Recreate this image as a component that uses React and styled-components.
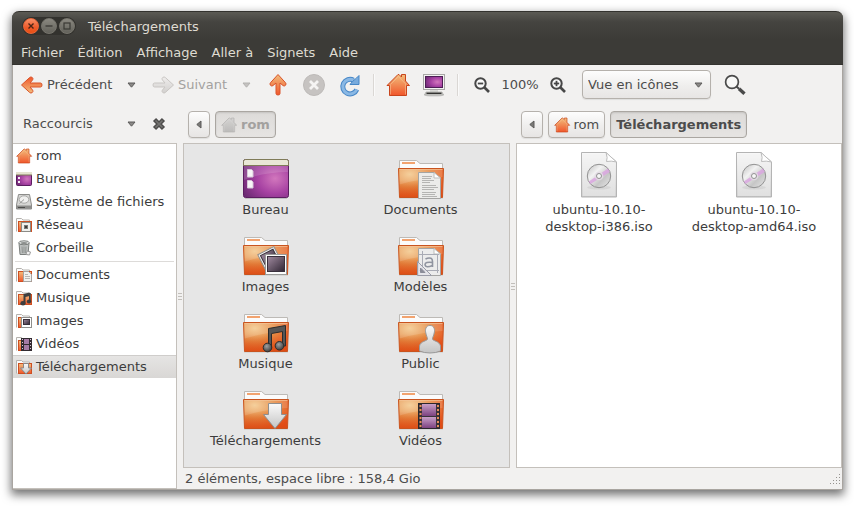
import React from "react";
import styled, { createGlobalStyle, css } from "styled-components";

const Global = createGlobalStyle`
  *, *::before, *::after { box-sizing: border-box; }
  body { margin: 0; background: #fff; }
  body, button, select {
    font-family: "DejaVu Sans", sans-serif;
    font-size: 13px;
    line-height: 17px;
    color: #4c4c4c;
  }
  button, select { border: 0; padding: 0; margin: 0; background: none; }
  svg { display: block; flex: none; overflow: visible; }
`;

const Desktop = styled.div`
  min-height: 100vh;
  display: flex;
  padding: 11px 11px 18px 12px;
`;

const Window = styled.div`
  flex: 1;
  min-width: 0;
  display: flex;
  flex-direction: column;
  border: 1px solid #a9a5a0;
  border-top: 0;
  border-radius: 7px 7px 0 0;
  background: #f2f1f0;
  box-shadow: 0 4px 10px 1px rgba(0, 0, 0, 0.55);
`;

const TitleBar = styled.header`
  display: flex;
  align-items: center;
  gap: 12px;
  height: 29px;
  margin: 0 -1px;
  padding: 0 10px;
  border-radius: 7px 7px 0 0;
  border-top: 1px solid #33322e;
  background: linear-gradient(#5b5a54, #454440 35%, #3c3b37);
`;

const Title = styled.h1`
  margin: 0;
  font-size: 13px;
  font-weight: normal;
  color: #dfdbd2;
`;

const WindowControls = styled.div`
  display: flex;
  gap: 2px;
  padding: 1px;
  border-radius: 10px;
  background: #33322e;
`;

const WindowControl = styled.button`
  width: 16px;
  height: 16px;
  border-radius: 50%;
  border: 1px solid ${(p) => (p.$primary ? "#e8663a" : "#77756d")};
  background: ${(p) =>
    p.$primary
      ? "linear-gradient(#f79068, #ee5a2a 60%, #e84f12)"
      : "linear-gradient(#8a8880, #63625b)"};
`;

const MenuBar = styled.nav`
  display: flex;
  align-items: center;
  gap: 14px;
  height: 25px;
  margin: 0 -1px;
  padding: 0 9px;
  border-bottom: 1px solid #34332f;
  background: #3c3b37;
`;

const MenuItem = styled.button`
  color: #dfdbd2;
`;

const Toolbar = styled.div`
  display: flex;
  align-items: center;
  height: 39px;
  padding: 0 5px;
`;

const NavGroup = styled.div`
  display: flex;
  align-items: center;
  gap: 4px;
  & + & { margin-left: 4px; }
`;

const NavButton = styled.button`
  display: flex;
  align-items: center;
  gap: 4px;
  width: ${(p) => p.$width}px;
  height: 30px;
  padding: 0 3px;
  white-space: nowrap;
  &:disabled { color: #a3a19f; }
`;

const IconButton = styled.button`
  display: flex;
  flex: none;
  align-items: center;
  justify-content: center;
  width: ${(p) => p.$width || 36}px;
  height: 30px;
`;

const Separator = styled.div`
  width: 2px;
  height: 22px;
  margin: 0 5px;
  border-left: 1px solid #dad7d4;
  border-right: 1px solid #fafafa;
`;

const ZoomLevel = styled.output`
  width: 40px;
  text-align: center;
`;

const raised = css`
  border: 1px solid #b5b1ac;
  border-radius: 4px;
  background: linear-gradient(#fdfdfd, #efeeed 55%, #e7e5e4);
  box-shadow: 0 1px 1px rgba(0, 0, 0, 0.08);
`;

const pressed = css`
  border: 1px solid #aaa6a1;
  border-radius: 4px;
  background: linear-gradient(#dddbd9, #e6e4e2);
  box-shadow: inset 0 1px 2px rgba(0, 0, 0, 0.12);
`;

const SelectBox = styled.div`
  display: grid;
  align-items: center;
  width: ${(p) => p.$width}px;
  margin: ${(p) => (p.$framed ? "0 6px" : "0")};
  > * { grid-area: 1 / 1; }
  > svg {
    justify-self: end;
    margin-right: 8px;
    pointer-events: none;
  }
`;

const Select = styled.select`
  appearance: none;
  width: 100%;
  height: 29px;
  padding: 0 22px 0 5px;
  ${(p) => p.$framed && raised}
`;

const Body = styled.div`
  flex: 1;
  display: flex;
  min-height: 0;
`;

const Sidebar = styled.aside`
  flex: none;
  display: flex;
  flex-direction: column;
  width: 164px;
`;

const SideHeader = styled.div`
  display: flex;
  align-items: center;
  height: 39px;
  padding-left: 5px;
`;

const Places = styled.nav`
  flex: 1;
  border: 1px solid #c4c0bb;
  border-left: 0;
  background: #fff;
`;

const Place = styled.button`
  display: flex;
  align-items: center;
  gap: 4px;
  width: 100%;
  height: 23px;
  padding: 0 3px;
  color: #3c3c3c;
  text-align: left;
  white-space: nowrap;
  ${(p) =>
    p.$selected &&
    css`
      box-shadow: inset 0 1px #cfcdcb;
      background: linear-gradient(#e6e5e4, #d9d7d5);
    `}
`;

const PlaceDivider = styled.hr`
  height: 1px;
  margin: 2px 2px 1px;
  border: 0;
  background: #dddbd9;
`;

const Splitter = styled.div`
  flex: none;
  display: flex;
  flex-direction: column;
  align-items: center;
  justify-content: center;
  gap: 2px;
  width: 6px;
`;

const Grip = styled.i`
  width: 4px;
  height: 1px;
  background: #c2bfbb;
`;

const Main = styled.main`
  flex: 1;
  min-width: 0;
  display: flex;
  flex-direction: column;
`;

const Panes = styled.div`
  flex: 1;
  display: flex;
`;

const Pane = styled.section`
  flex: 1;
  min-width: 0;
  display: flex;
  flex-direction: column;
`;

const PathBar = styled.nav`
  display: flex;
  align-items: center;
  gap: 5px;
  height: 39px;
  padding: 2px 5px 0;
`;

const PathButton = styled.button`
  display: flex;
  align-items: center;
  justify-content: center;
  gap: 4px;
  height: 27px;
  padding: 0 5px;
  min-width: 22px;
  font-weight: ${(p) => (p.$current ? "bold" : "normal")};
  ${(p) => (p.$current ? pressed : raised)}
  ${(p) => p.$dim && css`color: #a3a19f; svg { filter: grayscale(1); opacity: 0.35; }`}
`;

const FileGrid = styled.div`
  flex: 1;
  display: grid;
  grid-template-columns: repeat(auto-fill, 155px);
  align-content: start;
  gap: 18px 0;
  padding: ${(p) => (p.$inactive ? "15px 0 8px 4px" : "8px 0 8px 5px")};
  border: 1px solid #c4c0bb;
  background: ${(p) => (p.$inactive ? "#e6e6e6" : "#fff")};
`;

const FileItem = styled.button`
  display: flex;
  flex-direction: column;
  align-items: center;
  gap: 1px;
  color: #3c3c3c;
`;

const FileName = styled.span`
  max-width: 130px;
`;

const StatusBar = styled.footer`
  display: flex;
  align-items: center;
  justify-content: space-between;
  height: 21px;
  padding-left: 2px;
`;

const Defs = styled.svg`
  position: absolute;
  width: 0;
  height: 0;
`;

function Gradients() {
  return (
    <Defs aria-hidden="true">
      <defs>
        <linearGradient id="orange" x1="0" y1="0" x2="0" y2="1">
          <stop offset="0" stopColor="#f2bd7c" />
          <stop offset="1" stopColor="#f0562b" />
        </linearGradient>
        <linearGradient id="arrowOrange" x1="0" y1="0" x2="1" y2="0">
          <stop offset="0" stopColor="#f6c184" />
          <stop offset="1" stopColor="#ef7a41" />
        </linearGradient>
        <linearGradient id="grey" x1="0" y1="0" x2="0" y2="1">
          <stop offset="0" stopColor="#efedec" />
          <stop offset="1" stopColor="#d2d0ce" />
        </linearGradient>
        <linearGradient id="silver" x1="0" y1="0" x2="0" y2="1">
          <stop offset="0" stopColor="#fafafa" />
          <stop offset="1" stopColor="#c4c4c4" />
        </linearGradient>
        <radialGradient id="folder" cx="0.25" cy="0.2" r="0.9">
          <stop offset="0" stopColor="#f3c88c" />
          <stop offset="0.5" stopColor="#e58c45" />
          <stop offset="1" stopColor="#e8531f" />
        </radialGradient>
        <linearGradient id="folderShade" x1="0" y1="0" x2="0" y2="1">
          <stop offset="0.4" stopColor="#d9470f" stopOpacity="0" />
          <stop offset="1" stopColor="#d9470f" stopOpacity="0.65" />
        </linearGradient>
        <radialGradient id="purple" cx="0.7" cy="0.5" r="0.8">
          <stop offset="0" stopColor="#d277bd" />
          <stop offset="0.5" stopColor="#a641a2" />
          <stop offset="1" stopColor="#6b2a72" />
        </radialGradient>
        <linearGradient id="photo" x1="0" y1="0" x2="1" y2="1">
          <stop offset="0" stopColor="#a18ba0" />
          <stop offset="1" stopColor="#2f2533" />
        </linearGradient>
        <linearGradient id="film" x1="0" y1="0" x2="0" y2="1">
          <stop offset="0" stopColor="#c9a0c8" />
          <stop offset="1" stopColor="#7c4280" />
        </linearGradient>
        <linearGradient id="disc" x1="0" y1="0" x2="1" y2="1">
          <stop offset="0" stopColor="#bdbdbd" />
          <stop offset="0.35" stopColor="#f2f2f2" />
          <stop offset="0.65" stopColor="#c6c6c6" />
          <stop offset="1" stopColor="#e8e8e8" />
        </linearGradient>
        <radialGradient id="noteHead" cx="0.4" cy="0.35" r="0.7">
          <stop offset="0" stopColor="#a0a0a0" />
          <stop offset="1" stopColor="#3a3a3a" />
        </radialGradient>
      </defs>
    </Defs>
  );
}

const ARROW_RIGHT =
  "M2.5 9 Q1 9 1 11 Q1 13 2.5 13 H13 L10.3 16.2 Q9.6 17.6 10.8 18.6 Q12.2 19.6 13.4 18.4 L21.5 11 L13.4 3.6 Q12.2 2.4 10.8 3.4 Q9.6 4.4 10.3 5.8 L13 9 Z";

function BigArrow({ direction, muted }) {
  const turn = { right: 0, left: 180, up: -90 }[direction];
  return (
    <svg width="22" height="22" viewBox="0 0 22 22">
      <path
        d={ARROW_RIGHT}
        transform={`rotate(${turn} 11 11)`}
        fill={muted ? "url(#grey)" : direction === "up" ? "url(#arrowUp)" : "url(#orange)"}
        stroke={muted ? "#c9c6c3" : "#d9542a"}
        strokeLinejoin="round"
      />
      <defs>
        <linearGradient id="arrowUp" x1="1" y1="0" x2="0" y2="0">
          <stop offset="0" stopColor="#f2bd7c" />
          <stop offset="1" stopColor="#f0562b" />
        </linearGradient>
      </defs>
    </svg>
  );
}

function Caret({ muted }) {
  return (
    <svg width="9" height="6" viewBox="0 0 9 6">
      <path
        d="M1 1 H8 L4.5 5.2 Z"
        fill={muted ? "#c4c2c0" : "#8b8987"}
        stroke={muted ? "#b4b2b0" : "#5c5b5a"}
        strokeLinejoin="round"
      />
    </svg>
  );
}

function CaretLeft() {
  return (
    <svg width="6" height="9" viewBox="0 0 6 9">
      <path d="M5 1 V8 L0.8 4.5 Z" fill="#7a7977" stroke="#5c5b5a" strokeLinejoin="round" />
    </svg>
  );
}

function StopIcon() {
  return (
    <svg width="22" height="22" viewBox="0 0 22 22">
      <circle cx="11" cy="11" r="10.5" fill="#c6c3c1" stroke="#bdbab8" />
      <path d="M7 7 L15 15 M15 7 L7 15" stroke="#f5f4f3" strokeWidth="2.8" />
    </svg>
  );
}

function ReloadIcon() {
  return (
    <svg width="20" height="22" viewBox="0 0 20 22">
      <path d="M13.5 6.2 A7.3 7.3 0 1 0 16.8 15.5" fill="none" stroke="#4787c7" strokeWidth="5" />
      <path d="M13.5 6.2 A7.3 7.3 0 1 0 16.8 15.5" fill="none" stroke="#8ab8e4" strokeWidth="3" />
      <path d="M19 1.5 V10.5 H10 L12.5 7.5 L16.5 4 Z" fill="#78abdd" stroke="#4787c7" strokeLinejoin="round" />
    </svg>
  );
}

function HomeIcon({ size = 24 }) {
  return (
    <svg width={size} height={size} viewBox="0 0 24 24">
      <path
        d="M3.5 22.5 V12.5 H1 L12 1.5 H13 L15.5 4 V1.5 H19.5 V8 L23.5 12.5 H20.5 V22.5 Z"
        fill="url(#orange)" stroke="#c8451d" strokeLinejoin="round"
      />
      <path d="M4.5 21.5 V11.5 L12.5 3.5 L19.5 10.8 V21.5" fill="none" stroke="#f7c79a" opacity="0.55" />
    </svg>
  );
}

function ComputerIcon() {
  return (
    <svg width="22" height="24" viewBox="0 0 22 24">
      <ellipse cx="11" cy="22" rx="10" ry="1.6" fill="#000" opacity="0.15" />
      <rect x="0.5" y="1.5" width="21" height="15" fill="#f4f4f2" stroke="#a8a8a6" />
      <rect x="2.5" y="3.5" width="17" height="11" fill="url(#purple)" stroke="#4d1f55" />
      <rect x="7" y="17" width="8" height="2" fill="#d9d9d6" />
      <path d="M3 19 H19 L20.5 22 H1.5 Z" fill="#c9c9c6" stroke="#9a9a97" strokeWidth="0.6" />
      <path d="M3.5 20.3 H18.5" stroke="#333331" strokeWidth="1.4" />
    </svg>
  );
}

function ZoomIcon({ plus }) {
  return (
    <svg width="16" height="16" viewBox="0 0 16 16" fill="none" stroke="#474747">
      <circle cx="6.5" cy="6.5" r="5.2" strokeWidth="2" fill="#fafafa" />
      <path d="M3.8 6.5 H9.2" strokeWidth="1.8" />
      {plus && <path d="M6.5 3.8 V9.2" strokeWidth="1.8" />}
      <path d="M10.5 10.5 L15 15" strokeWidth="2.6" />
    </svg>
  );
}

function SearchIcon() {
  return (
    <svg width="22" height="22" viewBox="0 0 22 22" fill="none" stroke="#4a4a4a">
      <circle cx="8" cy="8" r="6.4" strokeWidth="1.7" fill="#f8f8f7" />
      <path d="M12.5 12.5 L15 14.8" strokeWidth="2" />
      <path d="M15 14.8 L20.5 19.8" strokeWidth="3.4" />
    </svg>
  );
}

function CloseIcon() {
  return (
    <svg width="14" height="14" viewBox="0 0 14 14">
      <path d="M2.5 2.5 L11.5 11.5 M11.5 2.5 L2.5 11.5" stroke="#4d4c4b" strokeWidth="4.4" />
      <path d="M3.5 3.5 L10.5 10.5 M10.5 3.5 L3.5 10.5" stroke="#747371" strokeWidth="1.6" />
    </svg>
  );
}

function DocumentEmblem() {
  return (
    <g>
      <path d="M21.5 13.5 H37 L43.5 19 V39.5 H21.5 Z" fill="#ececea" stroke="#a5a5a3" />
      <path d="M37 13.5 V19 H43.5 Z" fill="#fff" stroke="#bdbdbb" />
      <path d="M25 17.5 H35 M25 19.5 H34 M25 21.5 H37 M25 23.5 H33 M25 26.5 H39 M25 28.5 H41 M25 30.5 H37 M25 33.5 H39 M25 35.5 H38 M25 37.5 H40" stroke="#b5b5b3" />
    </g>
  );
}

function PhotoEmblem() {
  return (
    <g>
      <g transform="rotate(-27 27 22)">
        <rect x="18.5" y="14" width="18" height="18" fill="#f4f4f4" stroke="#8e8e8c" />
        <rect x="20.5" y="16" width="14" height="14" fill="url(#photo)" stroke="#3a333d" />
      </g>
      <rect x="23.5" y="18.5" width="21" height="20" fill="#fcfcfc" stroke="#9a9a98" />
      <rect x="25.5" y="20.5" width="17" height="15" fill="url(#photo)" stroke="#39303c" />
    </g>
  );
}

function TemplateEmblem() {
  return (
    <g fill="none" stroke="#a9abb5">
      <path d="M21.5 12.5 H37 L43.5 18 V39.5 H21.5 Z" fill="#ececec" stroke="#a5a5a3" />
      <path d="M37 12.5 V18 H43.5 Z" fill="#fff" stroke="#bdbdbb" />
      <path d="M22 18.5 H42 M22 34.5 H42 M25.5 15 V37 M40.5 19 V37" />
      <path
        d="M28.5 23 Q31.5 21.5 34 22.3 Q35.5 23 35.5 25.5 V31 M35.5 26.5 Q28 25.5 28 28.8 Q28.5 32.3 35.5 29.5"
        stroke="#9094a0" strokeWidth="1.6"
      />
      <path d="M20.5 25.5 V39.5 H34.5 Z" fill="#e4e4ea" fillOpacity="0.8" stroke="#9a9ca8" />
      <path d="M23.5 32 V36.5 H28 Z" fill="#8b8d99" stroke="#8b8d99" />
    </g>
  );
}

function MusicEmblem() {
  return (
    <g>
      <path d="M26.5 35 V15.5 L43.5 12.5 V33 H40.5 V18.5 L29.5 20.5 V35 Z" fill="#555" stroke="#2c2c2c" strokeLinejoin="round" />
      <circle cx="25.5" cy="34.5" r="4.3" fill="url(#noteHead)" stroke="#2c2c2c" />
      <circle cx="37.5" cy="32.8" r="4.3" fill="url(#noteHead)" stroke="#2c2c2c" />
    </g>
  );
}

function PersonEmblem() {
  return (
    <path
      d="M33 12.5 C28.5 12.5 28 17 28.8 20 C29.3 23 30.5 24 30.5 26 C30.5 28 23.5 28 22.5 33 V38 Q27 40 33 40 Q39 40 43.5 38 V33 C42.5 28 35.5 28 35.5 26 C35.5 24 36.7 23 37.2 20 C38 17 37.5 12.5 33 12.5 Z"
      fill="url(#silver)" stroke="#999"
    />
  );
}

function DownloadEmblem() {
  return (
    <path
      d="M26.5 13.5 H39.5 V24.5 H44.5 L33 38.5 L21.5 24.5 H26.5 Z"
      fill="url(#silver)" stroke="#8f8f8f" strokeLinejoin="round"
    />
  );
}

function FilmEmblem() {
  return (
    <g>
      <rect x="21.5" y="13.5" width="21" height="25" fill="#3a3338" stroke="#2c272b" />
      <rect x="25" y="14" width="14" height="12" fill="url(#film)" />
      <rect x="25" y="27" width="14" height="11" fill="url(#film)" />
      <path d="M23.5 15 V38 M41 15 V38" stroke="#e58c5a" strokeWidth="2" strokeDasharray="2 2" />
    </g>
  );
}

const EMBLEMS = {
  documents: DocumentEmblem,
  images: PhotoEmblem,
  templates: TemplateEmblem,
  music: MusicEmblem,
  public: PersonEmblem,
  downloads: DownloadEmblem,
  videos: FilmEmblem,
};

function FolderIcon({ kind }) {
  const Emblem = EMBLEMS[kind];
  return (
    <svg width="48" height="41" viewBox="0 0 48 41">
      <path d="M2.5 10 V1.5 H19.5 L23 4.5 H45.5 V10 Z" fill="#fbfbfb" stroke="#bdbab6" />
      <path d="M5 4 H18" stroke="#f2a36f" strokeWidth="2" />
      <path d="M2 39 H46" stroke="#000" opacity="0.12" />
      <path d="M1.5 9.5 H46.5 L45.5 38.5 H2.5 Z" fill="url(#folder)" stroke="#c9541f" strokeLinejoin="round" />
      <path d="M2 10 H46 L45 38 H3 Z" fill="url(#folderShade)" />
      <path d="M2.5 10.5 H45.5 V18 Q25 19 2.7 25.5 Z" fill="#fff" opacity="0.14" />
      <path d="M2.5 10.5 H45.5" stroke="#f6c89d" opacity="0.7" />
      <Emblem />
    </svg>
  );
}

function DesktopIcon() {
  return (
    <svg width="48" height="41" viewBox="0 0 48 41">
      <path d="M3 39.5 H45" stroke="#000" opacity="0.15" />
      <rect x="1.5" y="0.5" width="45" height="38" rx="2" fill="url(#purple)" stroke="#5b1d60" />
      <path d="M2 7 H46 V13 Q22 13 2 21 Z" fill="#fff" opacity="0.14" />
      <path d="M1.5 6.5 V2.5 Q1.5 0.5 3.5 0.5 H44.5 Q46.5 0.5 46.5 2.5 V6.5 Z" fill="#e9e7d6" stroke="#7f7b58" />
      <path d="M5.5 10.5 H9.5 L11 12 V18 H5.5 Z M5.5 21.5 H9.5 L11 23 V29 H5.5 Z" fill="#f7f5f7" stroke="#d8c9da" />
    </svg>
  );
}

function DiscImageIcon() {
  return (
    <svg width="48" height="48" viewBox="0 0 48 48">
      <path d="M6.5 0.5 H31 L41.5 10 V45 H6.5 Z" fill="url(#silver)" stroke="#b4b4b4" />
      <path d="M7.5 1.5 H31 L40.5 10 V44 H7.5 Z" fill="#f1f1f1" opacity="0.6" />
      <path d="M31 0.5 Q33 6 31.5 9.5 Q36 8.5 41.5 10 Z" fill="#fff" stroke="#bcbcbc" />
      <ellipse cx="24" cy="35.5" rx="12" ry="2" fill="#000" opacity="0.06" />
      <circle cx="24" cy="24" r="11.7" fill="url(#disc)" stroke="#929292" />
      <path d="M13.8 29.5 L33 16.5 L34.8 20 L15.5 32 Z" fill="#d9a3e0" opacity="0.8" />
      <circle cx="24" cy="24" r="4.3" fill="#e3dbe4" opacity="0.9" />
      <circle cx="24" cy="24" r="2.5" fill="#f7f7f7" stroke="#929292" />
    </svg>
  );
}

const SMALL_EMBLEMS = {
  network: (
    <g>
      <rect x="5.5" y="5.5" width="9" height="9" fill="#efefec" stroke="#8b8b86" />
      <rect x="8.5" y="8.5" width="3" height="3" fill="#3b3b39" stroke="#777" />
    </g>
  ),
  documents: (
    <g>
      <path d="M7.5 4.5 H12.5 L15.5 7.5 V14.5 H7.5 Z" fill="#f1f1ef" stroke="#a5a5a3" />
      <path d="M9 9.5 H14 M9 11.5 H14 M9 7.5 H12" stroke="#b8b8b6" />
    </g>
  ),
  music: (
    <g fill="#3e3e3e">
      <path d="M7.5 13 V4 L13.5 2.5 V6 L9.5 7 V13 Z" />
      <ellipse cx="7" cy="13.3" rx="2.6" ry="2.2" />
      <ellipse cx="13" cy="11.5" rx="2.2" ry="2" />
      <path d="M13 3 H14.8 V12 H13 Z" />
    </g>
  ),
  images: (
    <g>
      <rect x="5.5" y="4.5" width="10" height="10" fill="#fff" stroke="#8e8e8c" />
      <rect x="7.5" y="6.5" width="6" height="5" fill="url(#photo)" stroke="#39303c" />
    </g>
  ),
  videos: (
    <g>
      <rect x="5" y="2" width="11" height="13" fill="#322b31" />
      <rect x="8" y="3" width="5" height="5" fill="#a57ba6" />
      <rect x="8" y="9" width="5" height="5" fill="#a57ba6" />
      <path d="M6.5 3 V15 M14.5 3 V15" stroke="#d9c8d9" strokeDasharray="1 2" />
    </g>
  ),
  downloads: (
    <path d="M7.5 4.5 H12.5 V9 H15.5 L10 15 L4.5 9 H7.5 Z" fill="url(#silver)" stroke="#888" />
  ),
};

function SmallFolder({ kind }) {
  return (
    <svg width="16" height="16" viewBox="0 0 16 16">
      <path d="M0.5 14.5 V1.5 H5.5 L7 3 H13.5 V5" fill="#fbfbfb" stroke="#b5b2ae" />
      <rect x="2.5" y="4.5" width="13" height="10" fill="url(#orange)" stroke="#cd4f22" />
      {SMALL_EMBLEMS[kind]}
    </svg>
  );
}

function SmallDesktop() {
  return (
    <svg width="16" height="16" viewBox="0 0 16 16">
      <rect x="0.5" y="1.5" width="15" height="13" rx="1" fill="url(#purple)" stroke="#5b1d60" />
      <path d="M0 1 H16 V4 H0 Z" fill="#e4e2cf" />
      <path d="M0 4 H16" stroke="#7f7b58" />
      <path d="M2 6 H4 V8 H2 Z M2 10 H4 V12 H2 Z" fill="#f5eef5" />
    </svg>
  );
}

function DriveIcon() {
  return (
    <svg width="16" height="16" viewBox="0 0 16 16">
      <path d="M2.5 0.5 H13.5 L15.5 11 V15 H0.5 V11 Z" fill="#d6d6d4" stroke="#8c8c8a" strokeLinejoin="round" />
      <ellipse cx="8" cy="5.5" rx="4.8" ry="3.7" fill="#f0f0ef" stroke="#a9a9a7" />
      <path d="M1 11.5 H15 V14.8 H1 Z" fill="#8d8d8b" />
      <path d="M2 13.5 H9" stroke="#4c4c4a" />
      <path d="M3.5 9.5 L8 5.5" stroke="#9a9a98" />
    </svg>
  );
}

function TrashIcon() {
  return (
    <svg width="16" height="16" viewBox="0 0 16 16">
      <path d="M3 3 L4 14.5 H12 L13 3 Z" fill="#bdc0bf" stroke="#7b7f7d" />
      <ellipse cx="8" cy="2.8" rx="5.3" ry="2" fill="#e5e7e6" stroke="#7b7f7d" />
      <ellipse cx="8" cy="3" rx="3.5" ry="0.8" fill="#6d716f" />
      <path d="M6 6.5 L6.4 13 M10 6.5 L9.6 13 M8 6.5 V13" stroke="#8f9391" />
      <path d="M11 11 L14.5 12 L13.5 15 L10 14.5 Z" fill="#f1f1f1" stroke="#9d9d9d" />
    </svg>
  );
}

const PLACES = [
  { name: "rom", icon: <HomeIcon size={16} /> },
  { name: "Bureau", icon: <SmallDesktop /> },
  { name: "Système de fichiers", icon: <DriveIcon /> },
  { name: "Réseau", icon: <SmallFolder kind="network" /> },
  { name: "Corbeille", icon: <TrashIcon /> },
];

const BOOKMARKS = [
  { name: "Documents", icon: <SmallFolder kind="documents" /> },
  { name: "Musique", icon: <SmallFolder kind="music" /> },
  { name: "Images", icon: <SmallFolder kind="images" /> },
  { name: "Vidéos", icon: <SmallFolder kind="videos" /> },
  { name: "Téléchargements", icon: <SmallFolder kind="downloads" />, selected: true },
];

const HOME_FILES = [
  { name: "Bureau", icon: <DesktopIcon /> },
  { name: "Documents", icon: <FolderIcon kind="documents" /> },
  { name: "Images", icon: <FolderIcon kind="images" /> },
  { name: "Modèles", icon: <FolderIcon kind="templates" /> },
  { name: "Musique", icon: <FolderIcon kind="music" /> },
  { name: "Public", icon: <FolderIcon kind="public" /> },
  { name: "Téléchargements", icon: <FolderIcon kind="downloads" /> },
  { name: "Vidéos", icon: <FolderIcon kind="videos" /> },
];

const DOWNLOADS = [
  { name: "ubuntu-10.10-desktop-i386.iso", icon: <DiscImageIcon /> },
  { name: "ubuntu-10.10-desktop-amd64.iso", icon: <DiscImageIcon /> },
];

const MENUS = ["Fichier", "Édition", "Affichage", "Aller à", "Signets", "Aide"];

function PlaceList({ items }) {
  return items.map((item) => (
    <Place key={item.name} $selected={item.selected}>
      {item.icon}
      {item.name}
    </Place>
  ));
}

function Files({ items, inactive }) {
  return (
    <FileGrid $inactive={inactive}>
      {items.map((item) => (
        <FileItem key={item.name}>
          {item.icon}
          <FileName>{item.name}</FileName>
        </FileItem>
      ))}
    </FileGrid>
  );
}

function PaneSplitter() {
  return (
    <Splitter role="separator">
      <Grip />
      <Grip />
      <Grip />
    </Splitter>
  );
}

export default function App() {
  return (
    <Desktop>
      <Global />
      <Gradients />
      <Window>
        <TitleBar>
          <WindowControls>
            <WindowControl $primary aria-label="Fermer">
              <svg width="14" height="14" viewBox="0 0 14 14">
                <path d="M4.5 4.5 L9.5 9.5 M9.5 4.5 L4.5 9.5" stroke="#4a2416" strokeWidth="1.4" />
              </svg>
            </WindowControl>
            <WindowControl aria-label="Réduire">
              <svg width="14" height="14" viewBox="0 0 14 14">
                <path d="M3.5 7 H10.5" stroke="#3a3934" strokeWidth="1.3" />
              </svg>
            </WindowControl>
            <WindowControl aria-label="Agrandir">
              <svg width="14" height="14" viewBox="0 0 14 14">
                <rect x="4" y="4" width="6" height="6" fill="none" stroke="#3a3934" strokeWidth="1.2" />
              </svg>
            </WindowControl>
          </WindowControls>
          <Title>Téléchargements</Title>
        </TitleBar>
        <MenuBar>
          {MENUS.map((menu) => (
            <MenuItem key={menu}>{menu}</MenuItem>
          ))}
        </MenuBar>
        <Toolbar>
          <NavGroup>
            <NavButton $width={95}>
              <BigArrow direction="left" />
              Précédent
            </NavButton>
            <IconButton $width={28} aria-label="Historique précédent"><Caret /></IconButton>
          </NavGroup>
          <NavGroup>
            <NavButton $width={79} disabled>
              <BigArrow direction="right" muted />
              Suivant
            </NavButton>
            <IconButton $width={28} disabled aria-label="Historique suivant"><Caret muted /></IconButton>
          </NavGroup>
          <IconButton aria-label="Dossier parent"><BigArrow direction="up" /></IconButton>
          <IconButton disabled aria-label="Arrêter"><StopIcon /></IconButton>
          <IconButton aria-label="Actualiser"><ReloadIcon /></IconButton>
          <Separator />
          <IconButton aria-label="Dossier personnel"><HomeIcon /></IconButton>
          <IconButton aria-label="Poste de travail"><ComputerIcon /></IconButton>
          <Separator />
          <IconButton aria-label="Zoom arrière"><ZoomIcon /></IconButton>
          <ZoomLevel>100%</ZoomLevel>
          <IconButton aria-label="Zoom avant"><ZoomIcon plus /></IconButton>
          <SelectBox $width={129} $framed>
            <Select $framed aria-label="Mode d'affichage">
              <option>Vue en icônes</option>
            </Select>
            <Caret />
          </SelectBox>
          <IconButton aria-label="Rechercher"><SearchIcon /></IconButton>
        </Toolbar>
        <Body>
          <Sidebar>
            <SideHeader>
              <SelectBox $width={126}>
                <Select aria-label="Panneau latéral">
                  <option>Raccourcis</option>
                </Select>
                <Caret />
              </SelectBox>
              <IconButton $width={30} aria-label="Fermer le panneau"><CloseIcon /></IconButton>
            </SideHeader>
            <Places>
              <PlaceList items={PLACES} />
              <PlaceDivider />
              <PlaceList items={BOOKMARKS} />
            </Places>
          </Sidebar>
          <PaneSplitter />
          <Main>
            <Panes>
              <Pane>
                <PathBar>
                  <PathButton aria-label="Reculer"><CaretLeft /></PathButton>
                  <PathButton $current $dim><HomeIcon size={16} />rom</PathButton>
                </PathBar>
                <Files items={HOME_FILES} inactive />
              </Pane>
              <PaneSplitter />
              <Pane>
                <PathBar>
                  <PathButton aria-label="Reculer"><CaretLeft /></PathButton>
                  <PathButton><HomeIcon size={16} />rom</PathButton>
                  <PathButton $current>Téléchargements</PathButton>
                </PathBar>
                <Files items={DOWNLOADS} />
              </Pane>
            </Panes>
            <StatusBar>
              2 éléments, espace libre : 158,4 Gio
              <svg width="12" height="12" viewBox="0 0 12 12">
                <path
                  d="M9 1h1v1h-1z M9 4h1v1h-1z M6 4h1v1h-1z M9 7h1v1h-1z M6 7h1v1h-1z M3 7h1v1h-1z M9 10h1v1h-1z M6 10h1v1h-1z M3 10h1v1h-1z M0 10h1v1h-1z"
                  fill="#96938f"
                />
              </svg>
            </StatusBar>
          </Main>
        </Body>
      </Window>
    </Desktop>
  );
}
